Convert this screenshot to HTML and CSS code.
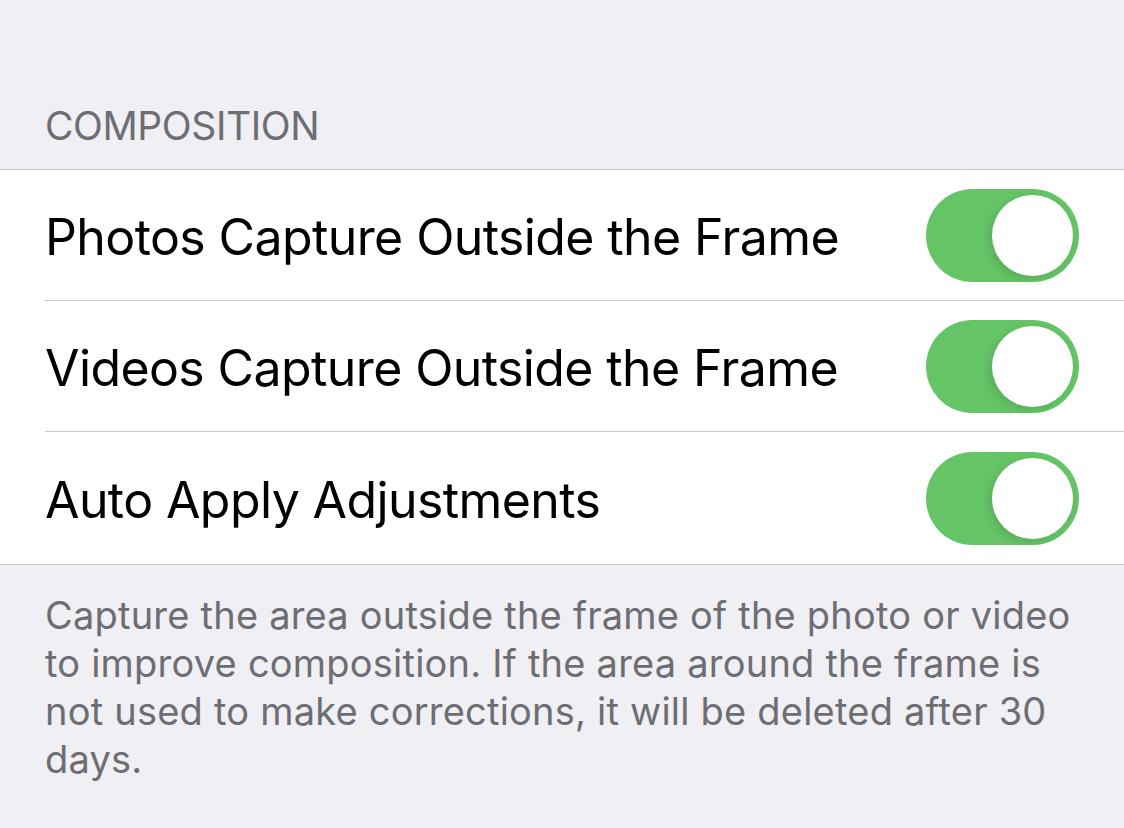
FILE: index.html
```html
<!DOCTYPE html>
<html lang="en">
<head>
  <meta charset="UTF-8">
  <title>Camera Settings - Composition</title>
  <link rel="stylesheet" href="styles.css">
</head>
<body>

<!-- Section header -->
<div class="section-header">COMPOSITION</div>

<!-- Toggle rows -->
<div class="group">
  <div class="row">
    <div class="row-inner">
      <span class="label">Photos Capture Outside the Frame</span>
      <div class="switch on"><div class="knob"></div></div>
    </div>
  </div>
  <div class="row">
    <div class="row-inner">
      <span class="label">Videos Capture Outside the Frame</span>
      <div class="switch on"><div class="knob"></div></div>
    </div>
  </div>
  <div class="row">
    <div class="row-inner">
      <span class="label">Auto Apply Adjustments</span>
      <div class="switch on"><div class="knob"></div></div>
    </div>
  </div>
</div>

<!-- Footer note -->
<div class="section-footer">
  Capture the area outside the frame of the photo or video to improve composition. If the area around the frame is not used to make corrections, it will be deleted after 30 days.
</div>

</body>
</html>
```

FILE: styles.css
```css
* {
  box-sizing: border-box;
}
body {
  margin: 0;
  font-family: Inter, 'Noto Sans', sans-serif;
  background: #efeff4;
  color: #000;
  height: 828px;
  overflow: hidden;
}
.section-header {
  height: 169px;
  display: flex;
  align-items: flex-end;
  padding: 0 45px 19px;
  font-size: 39px;
  line-height: 48px;
  color: #6d6d72;
  letter-spacing: -0.4px;
}
.group {
  background: #fff;
  border-top: 1px solid #c8c7cc;
  border-bottom: 1px solid #c8c7cc;
}
.row {
  padding-left: 45px;
}
.row-inner {
  height: 131px;
  display: flex;
  align-items: center;
  justify-content: space-between;
  padding-right: 45px;
  border-bottom: 1px solid #c8c7cc;
}
.row:last-child .row-inner {
  border-bottom: none;
  height: 132px;
}
.label {
  font-size: 50px;
  letter-spacing: -0.6px;
  padding-top: 4px;
}
.switch {
  width: 153px;
  height: 93px;
  border-radius: 47px;
  background: #e5e5ea;
  position: relative;
  flex-shrink: 0;
}
.switch.on {
  background: #65c466;
}
.knob {
  position: absolute;
  top: 6px;
  right: 6px;
  width: 81px;
  height: 81px;
  border-radius: 50%;
  background: #fff;
  box-shadow: -3px 3px 8px rgba(0,0,0,0.12);
}
.section-footer {
  padding: 26px 45px 0;
  font-size: 38px;
  line-height: 48px;
  color: #6d6d72;
  letter-spacing: 0.22px;
}
```
